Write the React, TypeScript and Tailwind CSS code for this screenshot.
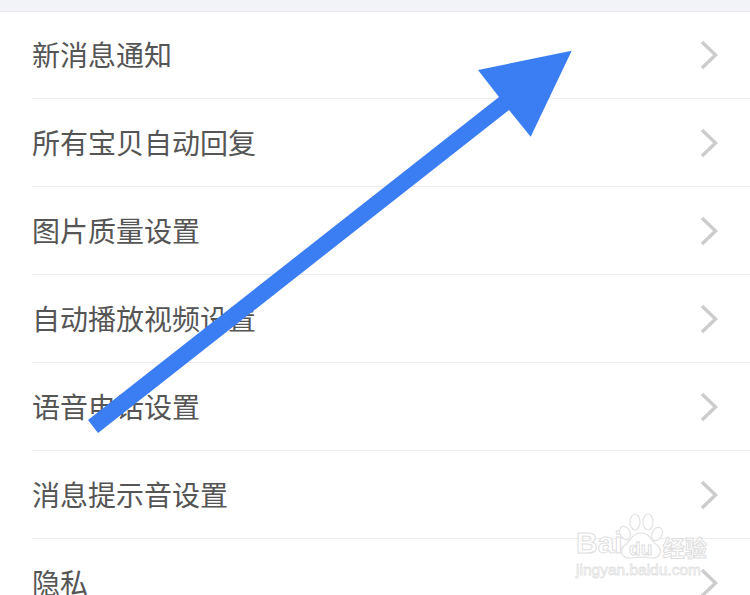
import React from "react";

const items = [
  "新消息通知",
  "所有宝贝自动回复",
  "图片质量设置",
  "自动播放视频设置",
  "语音电话设置",
  "消息提示音设置",
  "隐私",
];

function Chevron() {
  return (
    <svg width="20" height="32" viewBox="0 0 20 32" fill="none" className="shrink-0">
      <path d="M3 3 L16.5 16 L3 29" stroke="#cccccc" strokeWidth="3.4" />
    </svg>
  );
}

function Watermark() {
  return (
    <div className="absolute left-[576px] top-[512px] flex flex-col gap-[1px] pointer-events-none font-['Liberation_Sans',sans-serif] text-white">
      <div className="flex items-end h-[48px]">
        <span className="text-[30px] leading-[34px] font-bold [-webkit-text-stroke:1px_#dedede]">
          Bai
        </span>
        <div className="grid items-end justify-items-center -ml-[4px]">
          <svg width="44" height="48" viewBox="0 0 44 48" fill="white" stroke="#e2e2e2" strokeWidth="1.2" className="[grid-area:1/1]">
            <ellipse cx="6" cy="21" rx="5" ry="7" transform="rotate(-25 6 21)" />
            <ellipse cx="16" cy="10" rx="5" ry="8" />
            <ellipse cx="29" cy="10" rx="5" ry="8" />
            <ellipse cx="38" cy="22" rx="5" ry="7" transform="rotate(25 38 22)" />
            <path d="M22 21 C13 21 12 29 6 33 C-1 38 3 47 12 46 C18 45 26 45 32 46 C41 47 44 38 38 33 C32 29 31 21 22 21 Z" />
          </svg>
          <span className="[grid-area:1/1] pb-[1px] text-[19px] leading-[20px] font-bold [-webkit-text-stroke:1px_#dedede]">
            du
          </span>
        </div>
        <span className="pb-[2px] text-[22px] leading-[24px] font-bold font-['Noto_Sans_CJK_SC',sans-serif] [-webkit-text-stroke:1px_#dedede]">
          经验
        </span>
      </div>
      <span className="text-[15.5px] leading-[18px] [-webkit-text-stroke:0.8px_#e2e2e2]">
        jingyan.baidu.com
      </span>
    </div>
  );
}

export default function App() {
  return (
    <div className="relative w-[750px] h-[595px] overflow-hidden bg-white font-['Noto_Sans_CJK_SC','Liberation_Sans',sans-serif]">
      <div className="h-[12px] bg-[#f2f3f8] border-b border-[#ececf0]" />
      <div className="pl-[32px] -mt-[1px]">
        {items.map((label) => (
          <div
            key={label}
            className="h-[88px] flex items-center justify-between border-b border-[#ececec] pr-[31px] text-[28px] text-[#555555]"
          >
            <span className="leading-[40px] pb-[2px]">{label}</span>
            <Chevron />
          </div>
        ))}
      </div>

      {/* arrow drawn on top of the list */}
      <svg width="750" height="595" viewBox="0 0 750 595" className="absolute left-0 top-0">
        <polygon
          points="571.7,50.7 478,70 499,97 88,420 98,433 509,110 530.7,136.7"
          fill="#3b7ef4"
        />
      </svg>

      <Watermark />
    </div>
  );
}
